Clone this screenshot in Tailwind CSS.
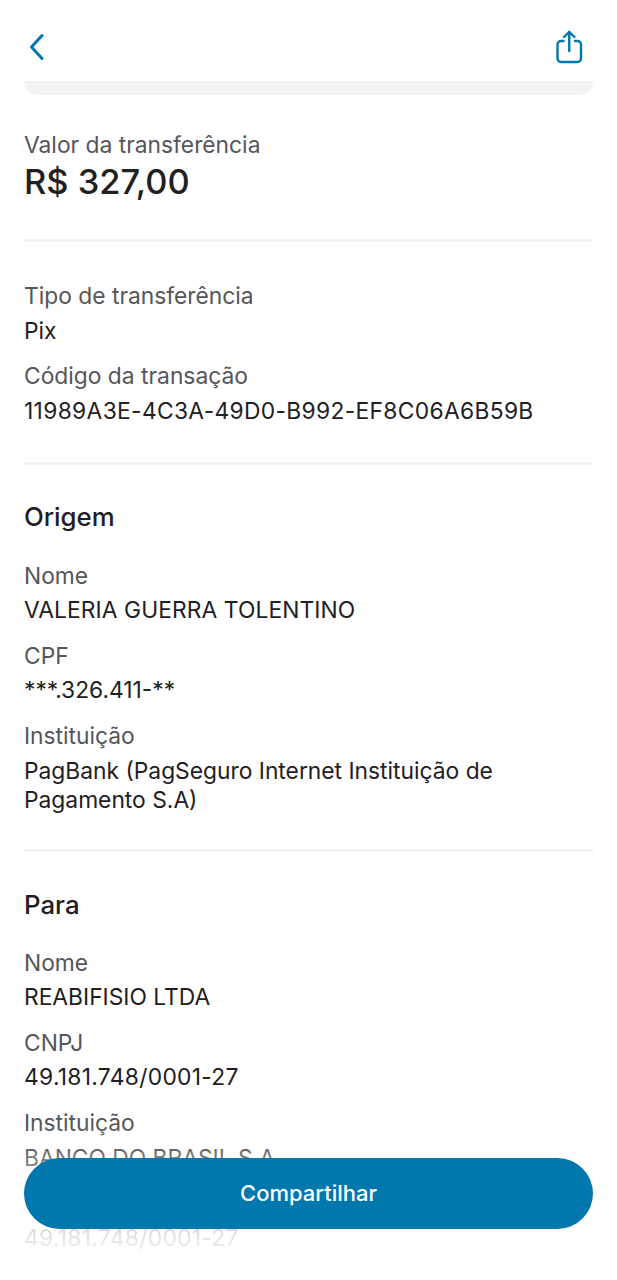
<!DOCTYPE html>
<html lang="pt-BR">
<head>
  <meta charset="UTF-8">
  <title>Comprovante</title>
  <script src="https://cdn.jsdelivr.net/npm/@tailwindcss/browser@4"></script>
</head>
<body class="bg-white font-['Inter',sans-serif] text-[#1f2023]">
<div class="relative w-[617px] h-[1280px] overflow-hidden">

  <header class="h-[81px] pl-[26px] pr-[34px] flex items-center justify-between">
    <svg class="w-[22px] h-[34px] mt-[12px]" viewBox="0 0 22 34" fill="none" stroke="#0077ad" stroke-width="3" stroke-linecap="round" stroke-linejoin="round"><path d="M16 5.500 L5.500 17 L16 28.500"/></svg>
    <svg class="w-[28px] h-[36px] mt-[14px]" viewBox="0 0 28 36" fill="none" stroke="#0077ad" stroke-width="2.400" stroke-linecap="round" stroke-linejoin="round"><path d="M8.500 11 H6 A3.500 3.500 0 0 0 2.500 14.500 V28.500 A3.500 3.500 0 0 0 6 32 H22.500 A3.500 3.500 0 0 0 26 28.500 V14.500 A3.500 3.500 0 0 0 22.500 11 H20"/><path d="M14.250 21 V2"/><path d="M9 7 L14.250 2 L19.500 7"/></svg>
  </header>

  <div class="mx-6 h-[14px] bg-[#f2f3f5] rounded-b-[14px]"></div>

  <main class="px-6">
    <section class="pt-[35px] pb-[36px] border-b-[3px] border-[#f3f4f6]">
      <p class="text-[22.800px] leading-[29px] text-[#55565a]">Valor da transferência</p>
      <p class="text-[34.400px] leading-[42px] font-medium mt-[2px]">R$ 327,00</p>
    </section>

    <section class="pt-[39px] pb-[37px] border-b-[3px] border-[#f3f4f6] space-y-4">
      <div>
        <p class="text-[22.800px] leading-[29px] text-[#55565a]">Tipo de transferência</p>
        <p class="text-[22.800px] leading-[29px] mt-[6px]">Pix</p>
      </div>
      <div>
        <p class="text-[22.800px] leading-[29px] text-[#55565a]">Código da transação</p>
        <p class="text-[22.800px] leading-[29px] tracking-[0.330px] mt-[6px]">11989A3E-4C3A-49D0-B992-EF8C06A6B59B</p>
      </div>
    </section>

    <section class="pt-[36px] pb-[35px] border-b-[3px] border-[#f3f4f6]">
      <h2 class="text-[25.800px] leading-[32px] font-[450]">Origem</h2>
      <div class="mt-[28px] space-y-4">
        <div>
          <p class="text-[22.800px] leading-[29px] text-[#55565a]">Nome</p>
          <p class="text-[22.800px] leading-[29px] tracking-[0.080px] mt-[5px] pb-[1px]">VALERIA GUERRA TOLENTINO</p>
        </div>
        <div>
          <p class="text-[22.800px] leading-[29px] text-[#55565a]">CPF</p>
          <p class="text-[22.800px] leading-[29px] mt-[5px] pb-[1px]">***.326.411-**</p>
        </div>
        <div>
          <p class="text-[22.800px] leading-[29px] text-[#55565a]">Instituição</p>
          <p class="text-[22.800px] leading-[29px] mt-[6px]">PagBank (PagSeguro Internet Instituição de Pagamento S.A)</p>
        </div>
      </div>
    </section>

    <section class="pt-[37px]">
      <h2 class="text-[25.800px] leading-[32px] font-[450]">Para</h2>
      <div class="mt-[27px] space-y-4">
        <div>
          <p class="text-[22.800px] leading-[29px] text-[#55565a]">Nome</p>
          <p class="text-[22.800px] leading-[29px] mt-[5px] pb-[1px]">REABIFISIO LTDA</p>
        </div>
        <div>
          <p class="text-[22.800px] leading-[29px] text-[#55565a]">CNPJ</p>
          <p class="text-[22.800px] leading-[29px] tracking-[0.300px] mt-[5px] pb-[1px]">49.181.748/0001-27</p>
        </div>
        <div>
          <p class="text-[22.800px] leading-[29px] text-[#55565a]">Instituição</p>
          <p class="text-[22.800px] leading-[29px] mt-[6px]">BANCO DO BRASIL S.A</p>
        </div>
        <div>
          <p class="text-[22.800px] leading-[29px] text-[#55565a]">CNPJ</p>
          <p class="text-[22.800px] leading-[29px] tracking-[0.300px] mt-[6px]">49.181.748/0001-27</p>
        </div>
      </div>
    </section>
  </main>

  <div class="absolute left-0 right-0 bottom-0 h-[155px] bg-linear-to-b from-white/0 from-0% via-white/40 via-20% to-white/90 to-75%"></div>
  <button class="absolute left-6 right-6 top-[1158px] h-[71px] rounded-[36px] bg-[#0077ad] text-white text-[22px] font-[550]">Compartilhar</button>
</div>
</body>
</html>
